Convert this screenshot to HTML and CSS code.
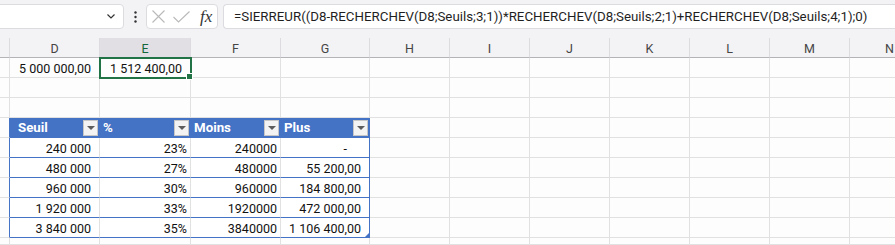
FILE: index.html
```html
<!DOCTYPE html>
<html>
<head>
    <meta charset="UTF-8">
    <title>Seuils</title>
    <link rel="stylesheet" href="styles.css">
</head>
<body>
    <!-- Barre de formule -->
    <div class="toolbar">
        <div class="namebox">
            <svg width="8" height="5" viewBox="0 0 8 5"><polyline points="0.5,0.5 4,4 7.5,0.5" fill="none" stroke="#333" stroke-width="1.2"/></svg>
        </div>
        <div class="more">
            <svg width="3" height="12" viewBox="0 0 3 12"><circle cx="1.5" cy="1.5" r="1.2" fill="#333"/><circle cx="1.5" cy="6" r="1.2" fill="#333"/><circle cx="1.5" cy="10.5" r="1.2" fill="#333"/></svg>
        </div>
        <div class="fxbox">
            <svg width="13" height="13" viewBox="0 0 13 13"><path d="M0.5 0.5 L12.5 12.5 M12.5 0.5 L0.5 12.5" stroke="#b9b9b9" stroke-width="1.1"/></svg>
            <svg width="17" height="12" viewBox="0 0 17 12"><polyline points="0.5,6 5.5,11 16.5,0.5" fill="none" stroke="#b9b9b9" stroke-width="1.1"/></svg>
            <span class="fx">fx</span>
        </div>
        <div class="formula">=SIERREUR((D8-RECHERCHEV(D8;Seuils;3;1))*RECHERCHEV(D8;Seuils;2;1)+RECHERCHEV(D8;Seuils;4;1);0)</div>
    </div>

    <!-- Feuille -->
    <div class="sheet">
        <div class="ch"></div>
        <div class="ch">D</div>
        <div class="ch sel">E</div>
        <div class="ch">F</div>
        <div class="ch">G</div>
        <div class="ch">H</div>
        <div class="ch">I</div>
        <div class="ch">J</div>
        <div class="ch">K</div>
        <div class="ch">L</div>
        <div class="ch">M</div>
        <div class="ch">N</div>

        <div class="c"></div>
        <div class="c num">5 000 000,00</div>
        <div class="c num active">1 512 400,00</div>
        <div class="c"></div><div class="c"></div><div class="c"></div><div class="c"></div><div class="c"></div><div class="c"></div><div class="c"></div><div class="c"></div><div class="c"></div>

        <div class="c"></div><div class="c"></div><div class="c"></div><div class="c"></div><div class="c"></div><div class="c"></div><div class="c"></div><div class="c"></div><div class="c"></div><div class="c"></div><div class="c"></div><div class="c"></div>

        <div class="c"></div><div class="c"></div><div class="c"></div><div class="c"></div><div class="c"></div><div class="c"></div><div class="c"></div><div class="c"></div><div class="c"></div><div class="c"></div><div class="c"></div><div class="c"></div>

        <!-- Tableau Seuils -->
        <div class="c edge"></div>
        <div class="c th first"><span>Seuil</span><span class="filter"></span></div>
        <div class="c th"><span>%</span><span class="filter"></span></div>
        <div class="c th"><span>Moins</span><span class="filter"></span></div>
        <div class="c th last"><span>Plus</span><span class="filter"></span></div>
        <div class="c"></div><div class="c"></div><div class="c"></div><div class="c"></div><div class="c"></div><div class="c"></div><div class="c"></div>

        <div class="c edge"></div>
        <div class="c td num">240 000</div>
        <div class="c td num tight">23%</div>
        <div class="c td num tight">240000</div>
        <div class="c td num last dash">-</div>
        <div class="c"></div><div class="c"></div><div class="c"></div><div class="c"></div><div class="c"></div><div class="c"></div><div class="c"></div>

        <div class="c edge"></div>
        <div class="c td num">480 000</div>
        <div class="c td num tight">27%</div>
        <div class="c td num tight">480000</div>
        <div class="c td num last">55 200,00</div>
        <div class="c"></div><div class="c"></div><div class="c"></div><div class="c"></div><div class="c"></div><div class="c"></div><div class="c"></div>

        <div class="c edge"></div>
        <div class="c td num">960 000</div>
        <div class="c td num tight">30%</div>
        <div class="c td num tight">960000</div>
        <div class="c td num last">184 800,00</div>
        <div class="c"></div><div class="c"></div><div class="c"></div><div class="c"></div><div class="c"></div><div class="c"></div><div class="c"></div>

        <div class="c edge"></div>
        <div class="c td num">1 920 000</div>
        <div class="c td num tight">33%</div>
        <div class="c td num tight">1920000</div>
        <div class="c td num last">472 000,00</div>
        <div class="c"></div><div class="c"></div><div class="c"></div><div class="c"></div><div class="c"></div><div class="c"></div><div class="c"></div>

        <div class="c edge"></div>
        <div class="c td num">3 840 000</div>
        <div class="c td num tight">35%</div>
        <div class="c td num tight">3840000</div>
        <div class="c td num last corner">1 106 400,00</div>
        <div class="c"></div><div class="c"></div><div class="c"></div><div class="c"></div><div class="c"></div><div class="c"></div><div class="c"></div>

        <div class="c"></div><div class="c"></div><div class="c"></div><div class="c"></div><div class="c"></div><div class="c"></div><div class="c"></div><div class="c"></div><div class="c"></div><div class="c"></div><div class="c"></div><div class="c"></div>
    </div>
</body>
</html>
```

FILE: styles.css
```css
/* Apparence type tableur */
body {
    margin: 0;
    padding: 0;
    background-color: #f3f2f5;
    font-family: Roboto, "Liberation Sans", sans-serif;
    overflow: hidden;
    width: 895px;
    height: 245px;
}

.toolbar {
    height: 38px;
    box-sizing: border-box;
    padding-top: 4px;
    display: flex;
    align-items: flex-start;
    white-space: nowrap;
}

.namebox {
    width: 134px;
    margin-left: -10px;
    height: 25px;
    box-sizing: border-box;
    background-color: #fff;
    border: 1px solid #dcdbe0;
    border-radius: 4px;
    display: flex;
    align-items: center;
    justify-content: flex-end;
    padding-right: 8px;
}

.more {
    width: 22px;
    height: 25px;
    display: flex;
    align-items: center;
    justify-content: center;
}

.fxbox {
    width: 72px;
    height: 25px;
    box-sizing: border-box;
    background-color: #fff;
    border: 1px solid #dcdbe0;
    border-radius: 4px;
    display: flex;
    align-items: center;
    padding-left: 5px;
}

.fxbox svg:nth-child(2) {
    margin-left: 8px;
}

.fx {
    margin-left: 10px;
    font-family: "Liberation Serif", serif;
    font-style: italic;
    font-size: 17px;
    color: #333;
    line-height: 1;
}

.formula {
    margin-left: 5px;
    flex: 1;
    height: 25px;
    box-sizing: border-box;
    background-color: #fff;
    border: 1px solid #dcdbe0;
    border-right: none;
    border-radius: 4px 0 0 4px;
    padding-left: 10px;
    font-size: 13.3px;
    line-height: 23px;
    color: #1f1f1f;
    overflow: hidden;
}

.sheet {
    display: grid;
    grid-template-columns: 10px 90px 91px 90px 89px repeat(7, 80px);
    grid-template-rows: repeat(10, 20px) 7px;
    overflow: hidden;
}

.ch {
    background-color: #f3f2f5;
    border-right: 1px solid #dddbe0;
    border-bottom: 1px solid #b5b3b8;
    text-align: center;
    font-size: 12.5px;
    line-height: 21px;
    color: #454545;
}

.ch.sel {
    background-color: #e1dfe4;
    color: #13663a;
}

.c {
    background-color: #fcfdfc;
    border-right: 1px solid #e1e1e1;
    border-bottom: 1px solid #e1e1e1;
    font-size: 12.5px;
    line-height: 21px;
    color: #111;
    padding: 0 4px;
    white-space: nowrap;
    overflow: hidden;
    position: relative;
}

.num {
    text-align: right;
    padding-right: 8px;
}

.num.tight {
    padding-right: 3px;
}

.num.dash {
    padding-right: 22px;
}

.active {
    outline: 2px solid #217346;
    outline-offset: -1px;
    overflow: visible;
    z-index: 1;
}

.active::after {
    content: "";
    position: absolute;
    right: -3px;
    bottom: -3px;
    width: 5px;
    height: 5px;
    background-color: #217346;
    border: 1px solid #fff;
}

.edge {
    border-right-color: #4472c4;
}

.th {
    background-color: #4472c4;
    border-right-color: #4472c4;
    border-bottom-color: #4472c4;
    color: #fff;
    font-weight: bold;
    font-size: 13.3px;
    display: flex;
    align-items: center;
    justify-content: space-between;
    padding: 0 0 0 3px;
}

.th.first {
    padding-left: 8px;
}

.th span:first-child {
    line-height: 21px;
}

.filter {
    width: 15px;
    height: 16px;
    box-sizing: border-box;
    background-color: #f3f3f3;
    border: 1px solid #c6c6c6;
    margin-right: 1px;
    margin-top: 1px;
    position: relative;
}

.filter::after {
    content: "";
    position: absolute;
    left: 3px;
    top: 5px;
    border-left: 4px solid transparent;
    border-right: 4px solid transparent;
    border-top: 4px solid #5c5c5c;
}

.td {
    background-color: #fff;
    border-bottom-color: #4472c4;
}

.last {
    border-right-color: #4472c4;
}

.corner::after {
    content: "";
    position: absolute;
    right: 0;
    bottom: 0;
    border-left: 4px solid transparent;
    border-bottom: 4px solid #4472c4;
}
```
